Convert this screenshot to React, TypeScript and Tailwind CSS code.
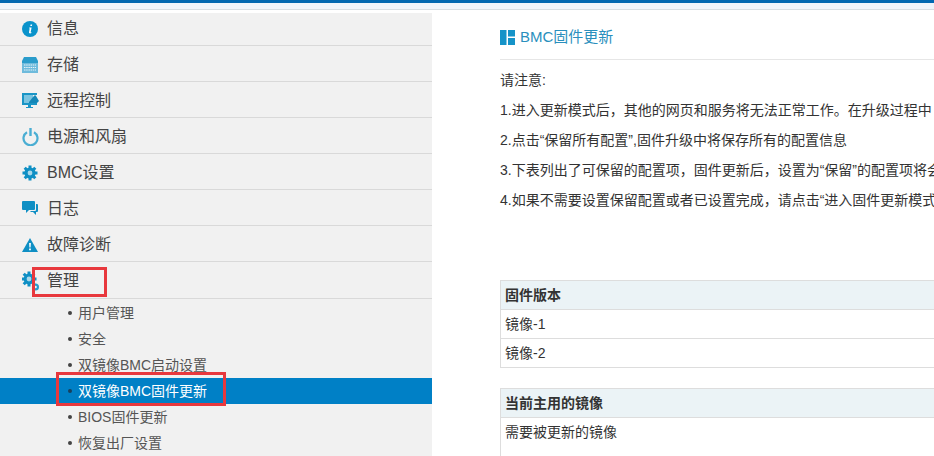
const font = { fontFamily: '"Liberation Sans","Noto Sans CJK SC",sans-serif' };

const Info = () => (
  <svg width="16" height="16" viewBox="0 0 16 16"><circle cx="8" cy="8" r="8" fill="#0a93cb" /><path d="M8.6 3.6h1.6l-.3 1.500H8.300zM7.400 6.400h2.200L8.700 11c-.1.500.2.600.9.300l-.1.700c-1 .500-2.700.700-2.500-.700l.7-4.100H6.900z" fill="#fff" /></svg>
);
const Storage = () => (
  <svg width="16" height="16" viewBox="0 0 16 16"><path d="M2 0h12l2 4v2H0V4z" fill="#2a9ccb" /><rect y="6" width="16" height="10" fill="#6fbbdc" /><path d="M2 8h12M2 10.500h12M2 13h12" stroke="#e6f3f9" strokeWidth="1" strokeDasharray="1.500 .7" /></svg>
);
const Remote = () => (
  <svg width="17" height="16" viewBox="0 0 17 16"><path d="M0 0h15v2H2v8h13v2H9v2h2v1H4v-1h2v-2H0z" fill="#1a95c6" /><path d="M2 2h9v8H2z" fill="#7cc4e0" /><path d="M7 9l4-5 2-2 1 1 3 5-2 2H7z" fill="#1487b8" /></svg>
);
const Power = () => (
  <svg width="17" height="18" viewBox="0 0 17 18" fill="none"><path d="M5 4.200a7 7 0 1 0 7 0" stroke="#4aaed3" strokeWidth="2.200" /><path d="M8.500 0v8" stroke="#4aaed3" strokeWidth="2.400" /></svg>
);
const Gear = () => (
  <svg width="16" height="16" viewBox="0 0 16 16"><circle cx="8" cy="8" r="5.600" fill="#0f8fc4" /><path d="M8 8V.5M8 8v7.500M8 8H.5M8 8h7.500M8 8L2.700 2.700M8 8l5.300 5.300M8 8l5.300-5.300M8 8l-5.300 5.300" stroke="#0f8fc4" strokeWidth="3" /><circle cx="8" cy="8" r="2.400" fill="#a9d8ea" /></svg>
);
const Log = () => (
  <svg width="16" height="15" viewBox="0 0 16 15"><path d="M1 0h11a1 1 0 0 1 1 1v7a1 1 0 0 1-1 1H7l-3 3V9H1a1 1 0 0 1-1-1V1a1 1 0 0 1 1-1z" fill="#0f8fc4" /><path d="M14 3h1a1 1 0 0 1 1 1v6a1 1 0 0 1-1 1h-1v3l-3-3H8l1-1h4a1 1 0 0 0 1-1z" fill="#0f8fc4" /></svg>
);
const Warn = () => (
  <svg width="16" height="14" viewBox="0 0 16 14"><path d="M8 0l8 14H0z" fill="#0f8fc4" /><path d="M7.100 5h1.800l-.3 4.500H7.400zM7.100 10.500h1.800v1.800H7.100z" fill="#fff" /></svg>
);
const Manage = () => (
  <svg width="17" height="20" viewBox="0 0 17 20">
    <circle cx="7" cy="8" r="5.400" fill="#0f8fc4" />
    <path d="M7 8V.5M7 8v7.500M7 8H-.5M7 8h7.500M7 8L1.700 2.700M7 8l5.300 5.300M7 8l5.300-5.300M7 8l-5.300 5.300" stroke="#0f8fc4" strokeWidth="3" />
    <circle cx="7" cy="8" r="2.400" fill="#a9d8ea" />
    <circle cx="13.500" cy="16" r="3.500" fill="#2a9ccb" />
    <circle cx="13.500" cy="16" r="1.300" fill="#f1f1f1" />
  </svg>
);

const items = [
  { t: "存储", i: <Storage /> },
  { t: "远程控制", i: <Remote /> },
  { t: "电源和风扇", i: <Power /> },
  { t: "BMC设置", i: <Gear /> },
  { t: "日志", i: <Log /> },
  { t: "故障诊断", i: <Warn /> },
];
const subs = ["用户管理", "安全", "双镜像BMC启动设置", "双镜像BMC固件更新", "BIOS固件更新", "恢复出厂设置"];

function Row({ t, i, cls }: { t: string; i: React.ReactNode; cls: string }) {
  return (
    <div className={`flex shrink-0 items-center border-b border-[#d9d9d9] pl-[22px] ${cls}`}>
      <span className="flex w-[25px] shrink-0 items-center">{i}</span>
      <span className="text-[16px] leading-none text-[#444]">{t}</span>
    </div>
  );
}

function Table({ head, rows, open }: { head: string; rows: string[]; open?: boolean }) {
  return (
    <div className="w-[700px] border-l border-[#dddddd] text-[14px] text-[#333]">
      <div className="flex h-[30px] items-center border-y border-[#dddddd] bg-[#ebf3f6] pl-1 font-bold">{head}</div>
      {rows.map((r) =>
        open ? (
          <div key={r} className="h-[40px] pl-1 pt-[4px]">{r}</div>
        ) : (
          <div key={r} className="flex h-[29px] items-center border-b border-[#dddddd] pl-1">{r}</div>
        )
      )}
    </div>
  );
}

export default function App() {
  return (
    <div style={font} className="relative flex h-[456px] w-[934px] flex-col overflow-hidden bg-white">
      <div className="h-[3px] shrink-0 bg-[#0067b1]" />
      <div className="h-[7px] shrink-0 border-b border-[#d5dde3] bg-[#eef4fb]" />
      <div className="flex min-h-0 flex-1">
        <aside className="mt-[3px] w-[432px] shrink-0 overflow-hidden bg-[#f1f1f1]">
          <Row t="信息" i={<Info />} cls="h-[33px]" />
          {items.map((x) => (
            <Row key={x.t} t={x.t} i={x.i} cls="h-9 pt-[2px]" />
          ))}
          <Row t="管理" i={<Manage />} cls="h-[37px] pt-[2px]" />
          <div className="pt-[1px]">
            {subs.map((s, n) => (
              <div key={s} className={`flex h-[26px] items-center pl-[68px] text-[14px] ${n === 3 ? "bg-[#0080c6] text-white" : "text-[#555]"}`}>
                <span className={`mr-[6px] size-[4px] rounded-full ${n === 3 ? "bg-[#17405e]" : "bg-[#444]"}`} />
                {s}
              </div>
            ))}
          </div>
        </aside>
        <main className="min-w-0 flex-1 overflow-hidden pl-[68px] whitespace-nowrap">
          <div className="flex h-[50px] w-[700px] items-center border-b border-[#e6e6e6] pt-[5px] text-[15px] text-[#2a8fbd]">
            <svg width="15" height="15" viewBox="0 0 15 15" className="mr-[5px]">
              <path d="M0 0h6.500v15H0zM8 0h7v6.500H8zM8 8h7v7H8z" fill="#1593c8" />
            </svg>
            BMC固件更新
          </div>
          <div className="pt-[5px] text-[14px] leading-[30px] text-[#333]">
            <p>请注意:</p>
            <p>1.进入更新模式后，其他的网页和服务将无法正常工作。在升级过程中</p>
            <p>2.点击“保留所有配置”,固件升级中将保存所有的配置信息</p>
            <p>3.下表列出了可保留的配置项，固件更新后，设置为“保留”的配置项将会</p>
            <p>4.如果不需要设置保留配置或者已设置完成，请点击“进入固件更新模式</p>
          </div>
          <div className="pt-[65px]">
            <Table head="固件版本" rows={["镜像-1", "镜像-2"]} />
          </div>
          <div className="pt-[20px]">
            <Table head="当前主用的镜像" rows={["需要被更新的镜像"]} open />
          </div>
        </main>
      </div>
      <div className="absolute left-[32px] top-[267px] h-[30px] w-[75px] border-[3px] border-[#e8383d]" />
      <div className="absolute left-[56px] top-[372px] h-[34px] w-[170px] border-[3px] border-[#e8383d]" />
    </div>
  );
}
